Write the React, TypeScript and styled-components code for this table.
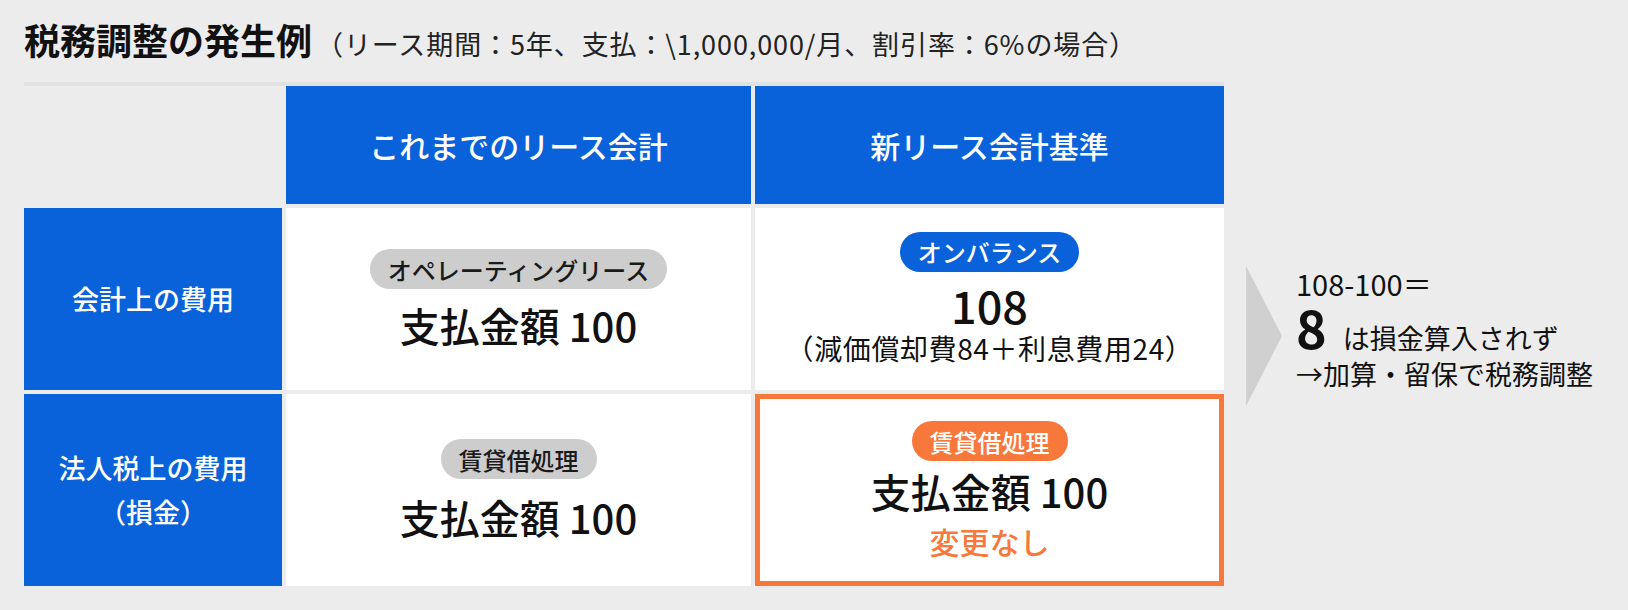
import React from "react";
import styled, { createGlobalStyle } from "styled-components";

const BLUE = "#0a62da";
const ORANGE = "#f7783a";
const PILL_GRAY = "#cdcdcd";

const GlobalStyle = createGlobalStyle`
  html, body {
    margin: 0;
    padding: 0;
    background: #ececec;
  }
  body {
    font-family: "Noto Sans CJK JP", "Noto Sans", sans-serif;
    color: #111;
  }
`;

const Page = styled.div`
  width: 1628px;
  height: 610px;
  padding-left: 24px;
  box-sizing: border-box;
  overflow: hidden;
`;

const Heading = styled.div`
  display: flex;
  align-items: baseline;
  height: 82px;
  padding-top: 18px;
  box-sizing: border-box;
`;

const Title = styled.h1`
  margin: 0;
  font-size: 36px;
  line-height: 1.2;
  font-weight: 700;
  color: #111;
`;

const Condition = styled.span`
  margin-left: 4px;
  font-size: 27px;
  line-height: 1.2;
  letter-spacing: 0.9px;
  color: #222;
`;

const Divider = styled.div`
  width: 1200px;
  height: 4px;
  background: #e1e1e1;
`;

const Body = styled.div`
  display: flex;
  align-items: center;
`;

const Table = styled.div`
  display: grid;
  grid-template-columns: 258px 465px 469px;
  grid-template-rows: 118px 182px 192px;
  gap: 4px;
  flex-shrink: 0;
`;

const Corner = styled.div`
  background: #ececec;
`;

const HeadCell = styled.div`
  display: flex;
  align-items: center;
  justify-content: center;
  background: ${BLUE};
  color: #fff;
  font-size: 30px;
  font-weight: 500;
`;

const RowLabel = styled.div`
  display: flex;
  flex-direction: column;
  align-items: center;
  justify-content: center;
  background: ${BLUE};
  color: #fff;
  font-size: 27px;
  font-weight: 500;
  line-height: 44px;
  text-align: center;
`;

const Cell = styled.div<{ $highlight?: boolean }>`
  display: flex;
  flex-direction: column;
  align-items: center;
  justify-content: center;
  background: #fff;
  box-sizing: border-box;
  border: ${(p) => (p.$highlight ? `5px solid ${ORANGE}` : "none")};
`;

const Pill = styled.span<{ $tone: "gray" | "blue" | "orange" }>`
  display: inline-flex;
  align-items: center;
  height: 40px;
  padding: 0 18px;
  border-radius: 20px;
  font-size: 24px;
  font-weight: 500;
  background: ${(p) =>
    p.$tone === "blue" ? BLUE : p.$tone === "orange" ? ORANGE : PILL_GRAY};
  color: ${(p) => (p.$tone === "gray" ? "#1a1a1a" : "#fff")};
`;

const Amount = styled.div<{ $gap?: number }>`
  margin-top: ${(p) => p.$gap ?? 12}px;
  font-size: 40px;
  line-height: 1.2;
  font-weight: 500;
`;

const Number = styled.div`
  margin-top: 8px;
  font-size: 45px;
  line-height: 1.1;
  font-weight: 500;
`;

const Breakdown = styled.div`
  margin-top: 3px;
  font-size: 28px;
  line-height: 1.2;
  letter-spacing: 0.6px;
`;

const Unchanged = styled.div`
  margin-top: 8px;
  font-size: 30px;
  line-height: 1.2;
  font-weight: 500;
  color: ${ORANGE};
`;

const Note = styled.div`
  display: flex;
  align-items: center;
  margin-left: 22px;
`;

const Arrow = styled.svg`
  display: block;
  flex-shrink: 0;
`;

const NoteText = styled.div`
  margin-left: 14px;
  padding-bottom: 16px;
  font-size: 27px;
  line-height: 1.2;
  color: #111;
`;

const NoteLine = styled.div<{ $gap?: number; $size?: number }>`
  margin-top: ${(p) => p.$gap ?? 0}px;
  font-size: ${(p) => p.$size ?? 27}px;
  white-space: nowrap;
`;

const Big = styled.span`
  font-size: 52px;
  font-weight: 700;
  line-height: 0.8;
  margin-right: 16px;
`;

export default function App() {
  return (
    <>
      <GlobalStyle />
      <Page>
        <Heading>
          <Title>税務調整の発生例</Title>
          <Condition>（リース期間：5年、支払：\1,000,000/月、割引率：6%の場合）</Condition>
        </Heading>
        <Divider />
        <Body>
          <Table>
            <Corner />
            <HeadCell>これまでのリース会計</HeadCell>
            <HeadCell>新リース会計基準</HeadCell>

            <RowLabel>会計上の費用</RowLabel>
            <Cell>
              <Pill $tone="gray">オペレーティングリース</Pill>
              <Amount>支払金額 100</Amount>
            </Cell>
            <Cell>
              <Pill $tone="blue">オンバランス</Pill>
              <Number>108</Number>
              <Breakdown>（減価償却費84＋利息費用24）</Breakdown>
            </Cell>

            <RowLabel>
              <span>法人税上の費用</span>
              <span>（損金）</span>
            </RowLabel>
            <Cell>
              <Pill $tone="gray">賃貸借処理</Pill>
              <Amount $gap={14}>支払金額 100</Amount>
            </Cell>
            <Cell $highlight>
              <Pill $tone="orange">賃貸借処理</Pill>
              <Amount $gap={6}>支払金額 100</Amount>
              <Unchanged>変更なし</Unchanged>
            </Cell>
          </Table>
          <Note>
            <Arrow width="36" height="140" viewBox="0 0 36 140">
              <polygon points="0,0 36,70 0,140" fill="#d0d0d0" />
            </Arrow>
            <NoteText>
              <NoteLine $size={29}>108-100＝</NoteLine>
              <NoteLine $gap={5}>
                <Big>8</Big>は損金算入されず
              </NoteLine>
              <NoteLine $gap={4}>→加算・留保で税務調整</NoteLine>
            </NoteText>
          </Note>
        </Body>
      </Page>
    </>
  );
}
